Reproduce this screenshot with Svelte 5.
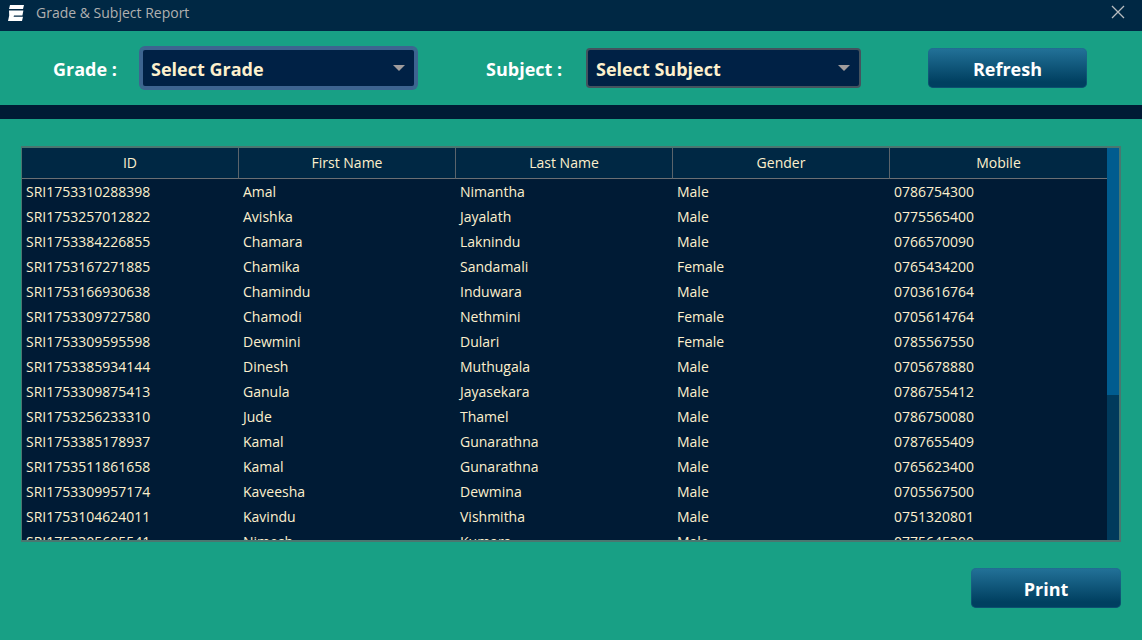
<script>
  const columns = ['ID', 'First Name', 'Last Name', 'Gender', 'Mobile'];
  const students = [
    ['SRI1753310288398', 'Amal', 'Nimantha', 'Male', '0786754300'],
    ['SRI1753257012822', 'Avishka', 'Jayalath', 'Male', '0775565400'],
    ['SRI1753384226855', 'Chamara', 'Laknindu', 'Male', '0766570090'],
    ['SRI1753167271885', 'Chamika', 'Sandamali', 'Female', '0765434200'],
    ['SRI1753166930638', 'Chamindu', 'Induwara', 'Male', '0703616764'],
    ['SRI1753309727580', 'Chamodi', 'Nethmini', 'Female', '0705614764'],
    ['SRI1753309595598', 'Dewmini', 'Dulari', 'Female', '0785567550'],
    ['SRI1753385934144', 'Dinesh', 'Muthugala', 'Male', '0705678880'],
    ['SRI1753309875413', 'Ganula', 'Jayasekara', 'Male', '0786755412'],
    ['SRI1753256233310', 'Jude', 'Thamel', 'Male', '0786750080'],
    ['SRI1753385178937', 'Kamal', 'Gunarathna', 'Male', '0787655409'],
    ['SRI1753511861658', 'Kamal', 'Gunarathna', 'Male', '0765623400'],
    ['SRI1753309957174', 'Kaveesha', 'Dewmina', 'Male', '0705567500'],
    ['SRI1753104624011', 'Kavindu', 'Vishmitha', 'Male', '0751320801'],
    ['SRI1753305605541', 'Nimesh', 'Kumara', 'Male', '0775645300']
  ];
  let grade = $state('Select Grade');
  let subject = $state('Select Subject');
</script>

<div class="window">
  <header class="titlebar">
    <svg class="logo" viewBox="0 0 16 16" width="16" height="16" aria-hidden="true">
      <path d="M2 0H16L15 4H1ZM1 5.6H15.4L14.4 10.4H6L5.6 11.8H15L14 16H0L1.2 10.4Z" />
    </svg>
    <h1>Grade &amp; Subject Report</h1>
    <button class="close" type="button" aria-label="Close">
      <svg viewBox="0 0 14 14" width="14" height="14" aria-hidden="true">
        <path d="M1 1L13 13M13 1L1 13" />
      </svg>
    </button>
  </header>

  <form class="filters" onsubmit={(e) => e.preventDefault()}>
    <label for="grade">Grade :</label>
    <div class="picker focused">
      <select id="grade" bind:value={grade}>
        <option>Select Grade</option>
      </select>
      <svg viewBox="0 0 12 6" width="12" height="6" aria-hidden="true"><path d="M0 0H12L6 6Z" /></svg>
    </div>
    <label class="second" for="subject">Subject :</label>
    <div class="picker">
      <select id="subject" bind:value={subject}>
        <option>Select Subject</option>
      </select>
      <svg viewBox="0 0 12 6" width="12" height="6" aria-hidden="true"><path d="M0 0H12L6 6Z" /></svg>
    </div>
    <button class="action refresh" type="submit">Refresh</button>
  </form>

  <main>
    <div class="panel">
      <div class="rows">
        <table>
          <thead>
            <tr>
              {#each columns as column}
                <th scope="col">{column}</th>
              {/each}
            </tr>
          </thead>
          <tbody>
            {#each students as student}
              <tr>
                {#each student as value}
                  <td>{value}</td>
                {/each}
              </tr>
            {/each}
          </tbody>
        </table>
      </div>
      <div class="track"><div class="thumb"></div></div>
    </div>
    <button class="action print" type="button">Print</button>
  </main>
</div>

<style>
  :global(body) {
    margin: 0;
  }
  .window {
    display: flex;
    flex-direction: column;
    height: 100vh;
    background: #18a085;
    color: #fdf0cd;
    font-family: 'Open Sans', 'Noto Sans', sans-serif;
    font-size: 14px;
  }
  .window :is(button, select) {
    font-family: inherit;
    margin: 0;
  }
  .titlebar {
    display: flex;
    align-items: center;
    gap: 12px;
    box-sizing: border-box;
    height: 31px;
    padding: 0 17px 5px 8px;
    background: #002844;
    color: #b0b0b0;
  }
  .logo {
    fill: #fff;
  }
  h1 {
    flex: 1;
    margin: 0;
    font-size: 14px;
    font-weight: 400;
    line-height: 20px;
  }
  .close {
    display: flex;
    padding: 0 0 2px;
    border: 0;
    background: none;
  }
  .close svg {
    fill: none;
    stroke: #b8bcc0;
    stroke-width: 1.3;
  }
  .filters {
    display: grid;
    grid-template-columns: 88px 275fr 170px 275fr 67px 159fr;
    align-items: center;
    height: 74px;
    padding: 0 55px 0 53px;
    border-bottom: 14px solid #001b35;
    color: #fff;
    font-size: 18px;
    font-weight: 700;
  }
  label {
    padding-top: 2px;
  }
  .second {
    padding-left: 70px;
  }
  .picker {
    display: grid;
    align-items: center;
    border-radius: 4px;
  }
  .picker > * {
    grid-area: 1 / 1;
  }
  .focused {
    box-shadow: 0 0 0 2px #3d6490;
  }
  .picker svg {
    justify-self: end;
    margin-right: 11px;
    fill: #a09c9c;
    pointer-events: none;
  }
  select {
    appearance: none;
    box-sizing: border-box;
    width: 100%;
    height: 40px;
    padding: 2px 32px 0 8px;
    border: 2px solid #44525e;
    border-radius: 4px;
    outline: none;
    background: #002145;
    color: #fdf0cd;
    font-size: 18px;
    font-weight: 700;
  }
  .focused select {
    border-color: #3d6490;
  }
  .action {
    box-sizing: border-box;
    height: 40px;
    padding: 2px 0 0;
    border: 0;
    border-radius: 5px;
    background: linear-gradient(#237299, #003f60 85%);
    box-shadow: inset 0 0 0 1px #1d6a8866;
    color: #fff;
    font-size: 18px;
    font-weight: 700;
  }
  .refresh {
    grid-column: 6;
  }
  main {
    display: flex;
    flex: 1;
    flex-direction: column;
    gap: 26px;
    min-height: 0;
    padding: 27px 21px 32px;
  }
  .panel {
    display: flex;
    flex: 1;
    min-height: 0;
    border: 2px solid #4a7670;
    border-left-width: 1px;
    background: #001b35;
  }
  .rows {
    flex: 1;
    overflow: hidden;
  }
  table {
    width: 100%;
    border-spacing: 0;
    table-layout: fixed;
  }
  th {
    box-sizing: border-box;
    height: 31px;
    padding: 0 0 2px;
    border-right: 1px solid #5b646b;
    border-bottom: 1px solid #6b6f73;
    background: #002844;
    font-weight: 400;
  }
  th:last-child {
    border-right: 0;
  }
  td {
    height: 25px;
    padding: 0 4px;
    line-height: 25px;
  }
  .track {
    width: 12px;
    background: #003a5c;
  }
  .thumb {
    height: 63%;
    background: #005c8f;
  }
  .print {
    align-self: flex-end;
    width: 150px;
  }
</style>
